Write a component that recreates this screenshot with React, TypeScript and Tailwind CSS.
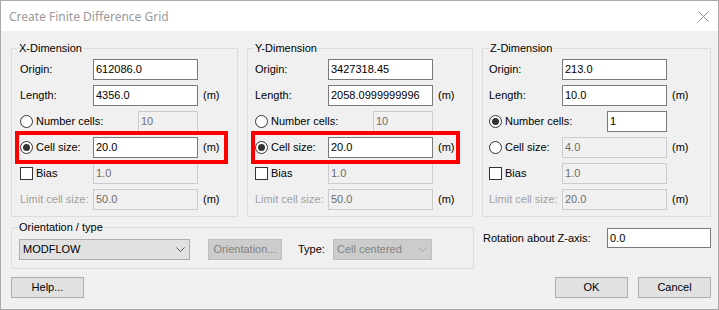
import React from "react";

const font = "font-['Liberation_Sans',Arial,sans-serif] text-[11px] leading-[13px]";

function Box({ value, w = "w-[105px]", disabled = false }: { value: string; w?: string; disabled?: boolean }) {
  return (
    <div
      className={`flex h-[21px] items-center px-[2px] ${w} ${
        disabled ? "border border-[#cccccc] bg-[#f0f0f0] text-[#6d6d6d]" : "border border-[#7a7a7a] bg-white text-black"
      }`}
    >
      {value}
    </div>
  );
}

function Radio({ checked = false }: { checked?: boolean }) {
  return (
    <span className="mr-[3px] flex h-[13px] w-[13px] items-center justify-center rounded-full border border-[#333333] bg-white">
      {checked && <span className="h-[7px] w-[7px] rounded-full bg-[#333333]" />}
    </span>
  );
}

function Check() {
  return <span className="mr-[3px] h-[13px] w-[13px] border border-[#333333] bg-white" />;
}

function Unit() {
  return <span className="ml-[5px]">(m)</span>;
}

function RedMark({ pos }: { pos: string }) {
  return <span className={`pointer-events-none absolute -top-[6px] h-[33px] border-4 border-[#ff0000] ${pos}`} />;
}

interface Dim {
  title: string;
  width: string;
  pad: string;
  origin: string;
  length: string;
  cells: string;
  size: string;
  limit: string;
  byCells?: boolean;
  mark?: string;
}

function Group({ d }: { d: Dim }) {
  return (
    <div className={`relative h-[169px] border border-[#dcdcdc] pt-[10px] ${d.pad} ${d.width}`}>
      <span className="absolute -top-[7px] left-[6px] bg-[#f0f0f0] px-[1px]">{d.title}</span>
      <div className="flex flex-col gap-[5px]">
        <div className="flex h-[21px] items-center">
          <span className="w-[73px]">Origin:</span>
          <Box value={d.origin} />
        </div>
        <div className="flex h-[21px] items-center">
          <span className="w-[73px]">Length:</span>
          <Box value={d.length} />
          <Unit />
        </div>
        <div className="flex h-[21px] items-center">
          <span className="flex w-[118px] items-center">
            <Radio checked={d.byCells} />
            Number cells:
          </span>
          <Box value={d.cells} w="w-[60px]" disabled={!d.byCells} />
        </div>
        <div className="relative flex h-[21px] items-center">
          {d.mark && <RedMark pos={d.mark} />}
          <span className="flex w-[73px] items-center">
            <Radio checked={!d.byCells} />
            Cell size:
          </span>
          <Box value={d.size} disabled={d.byCells} />
          <Unit />
        </div>
        <div className="flex h-[21px] items-center">
          <span className="flex w-[73px] items-center">
            <Check />
            Bias
          </span>
          <Box value="1.0" disabled />
        </div>
        <div className="flex h-[21px] items-center">
          <span className="w-[73px] text-[#a0a0a0]">Limit cell size:</span>
          <Box value={d.limit} disabled />
          <Unit />
        </div>
      </div>
    </div>
  );
}

function Chevron({ color }: { color: string }) {
  return (
    <svg width="9" height="5" viewBox="0 0 9 5" className="ml-auto mr-[4px]">
      <polyline points="0.5,0.5 4.5,4.5 8.5,0.5" fill="none" stroke={color} strokeWidth="1" />
    </svg>
  );
}

function Button({ label, w = "w-[73px]" }: { label: string; w?: string }) {
  return (
    <div className={`flex h-[21px] items-center justify-center border border-[#adadad] bg-[#e1e1e1] ${w}`}>{label}</div>
  );
}

const dims: Dim[] = [
  {
    title: "X-Dimension",
    width: "w-[227px]",
    pad: "pl-[8px]",
    origin: "612086.0",
    length: "4356.0",
    cells: "10",
    size: "20.0",
    limit: "50.0",
    mark: "-left-[5px] w-[213px]",
  },
  {
    title: "Y-Dimension",
    width: "w-[226px]",
    pad: "pl-[7px]",
    origin: "3427318.45",
    length: "2058.0999999996",
    cells: "10",
    size: "20.0",
    limit: "50.0",
    mark: "-left-[4px] w-[209px]",
  },
  {
    title: "Z-Dimension",
    width: "w-[229px]",
    pad: "pl-[6px]",
    origin: "213.0",
    length: "10.0",
    cells: "1",
    size: "4.0",
    limit: "20.0",
    byCells: true,
  },
];

export default function App() {
  return (
    <div className={`flex h-[310px] w-[719px] flex-col border border-[#aaaaaa] text-black ${font}`}>
      <div className="flex h-[30px] shrink-0 items-center bg-white pl-[8px] pr-[9px]">
        <span className="font-['Noto_Sans',sans-serif] text-[12px] text-[#9a9a9a]">Create Finite Difference Grid</span>
        <svg width="11" height="11" viewBox="0 0 11 11" className="ml-auto">
          <path d="M0.5 0.5 L10.5 10.5 M10.5 0.5 L0.5 10.5" stroke="#8c8c8c" strokeWidth="1" />
        </svg>
      </div>
      <div className="flex-1 bg-[#f0f0f0] pl-[10px]">
        <div className="mt-[17px] flex gap-[9px]">
          {dims.map((d) => (
            <Group key={d.title} d={d} />
          ))}
        </div>
        <div className="mt-[10px] flex">
          <div className="relative flex h-[42px] w-[463px] items-start border border-[#dcdcdc] pl-[7px] pt-[11px]">
            <span className="absolute -top-[7px] left-[6px] bg-[#f0f0f0] px-[1px]">Orientation / type</span>
            <div className="flex h-[21px] w-[171px] items-center border border-[#adadad] bg-[#e1e1e1] pl-[3px]">
              MODFLOW
              <Chevron color="#555555" />
            </div>
            <div className="ml-[18px] flex h-[21px] w-[74px] items-center justify-center border border-[#bfbfbf] bg-[#cccccc] text-[#838383]">
              Orientation...
            </div>
            <span className="ml-[16px] flex h-[21px] w-[35px] items-center">Type:</span>
            <div className="flex h-[21px] w-[99px] items-center border border-[#bfbfbf] bg-[#cccccc] pl-[3px] text-[#838383]">
              Cell centered
              <Chevron color="#a8a8a8" />
            </div>
          </div>
          <div className="ml-[9px] mt-[1px] flex h-[20px] items-center">
            <span className="w-[124px]">Rotation about Z-axis:</span>
            <div className="flex h-[20px] w-[104px] items-center border border-[#7a7a7a] bg-white px-[2px]">0.0</div>
          </div>
        </div>
        <div className="mt-[8px] flex w-[700px] items-center">
          <Button label="Help..." />
          <div className="ml-auto flex gap-[10px]">
            <Button label="OK" />
            <Button label="Cancel" />
          </div>
        </div>
      </div>
    </div>
  );
}
